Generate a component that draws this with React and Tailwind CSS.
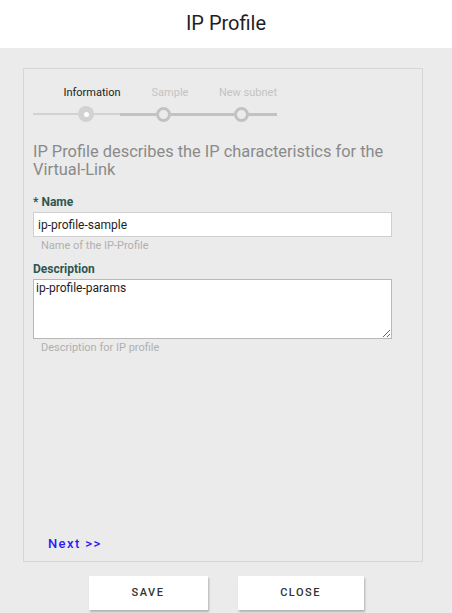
export default function App() {
  const font = { fontFamily: 'Roboto, "Liberation Sans", sans-serif' };
  return (
    <div className="w-[452px] h-[613px] flex flex-col bg-[#ebebeb]" style={font}>
      <div className="h-[48px] bg-white flex items-center justify-center shrink-0">
        <h1 className="text-[20px] leading-none text-[#1f1f1f] pb-[2px]">IP Profile</h1>
      </div>

      <div className="flex-1 flex flex-col">
        <div className="mt-[20px] ml-[23px] w-[400px] h-[494px] border border-[#d6d6d6] flex flex-col px-[9px]">
          {/* stepper */}
          <div className="mt-[17px] flex text-[11px] leading-[14px] h-[14px]">
            <span className="ml-[20px] w-[78px] text-center text-[#222]">Information</span>
            <span className="w-[78px] text-center text-[#c4c4c4]">Sample</span>
            <span className="w-[78px] text-center text-[#c4c4c4]">New subnet</span>
          </div>
          <div className="mt-[6px] h-[16px] flex items-center">
            <div className="w-[45px] h-[2px] bg-[#d2d2d2]" />
            <div className="w-[16px] h-[16px] rounded-full bg-[#d2d2d2] flex items-center justify-center">
              <div className="w-[5px] h-[5px] rounded-full bg-white" />
            </div>
            <div className="w-[26px] h-[2px] bg-[#d2d2d2]" />
            <div className="w-[36px] h-[3px] bg-[#c2c2c2]" />
            <div className="w-[15px] h-[15px] rounded-full border-[3px] border-[#c2c2c2]" />
            <div className="w-[63px] h-[3px] bg-[#c2c2c2]" />
            <div className="w-[15px] h-[15px] rounded-full border-[3px] border-[#c2c2c2]" />
            <div className="w-[28px] h-[3px] bg-[#c2c2c2]" />
          </div>

          <p className="mt-[21px] text-[16.4px] leading-[18px] text-[#8a8a8a] pr-[10px]">
            IP Profile describes the IP characteristics for the Virtual-Link
          </p>

          <label className="mt-[15px] text-[12px] leading-[16px] font-bold text-[#2e5750]">* Name</label>
          <div className="mt-[2px] w-[359px] h-[25px] bg-white border border-[#cfcfcf] flex items-center px-[4px] text-[12px] text-[#1e1e1e]">
            ip-profile-sample
          </div>
          <p className="mt-[2px] ml-[8px] text-[11px] leading-[14px] text-[#b0b0b0]">Name of the IP-Profile</p>

          <label className="mt-[8px] text-[12px] leading-[16px] font-bold text-[#2e5750]">Description</label>
          <textarea
            readOnly
            defaultValue="ip-profile-params"
            className="mt-[2px] w-[359px] h-[60px] bg-white border border-[#b8b8b8] px-[2px] py-0 text-[12px] leading-[16px] text-[#1e1e1e] outline-none"
            style={font}
          />
          <p className="mt-[2px] ml-[8px] text-[11px] leading-[14px] text-[#b0b0b0]">Description for IP profile</p>

          <div className="flex-1" />
          <a className="mb-[8px] ml-[15px] text-[13px] leading-[18px] font-medium tracking-[1.4px] text-[#2b1cf5]">Next &gt;&gt;</a>
        </div>

        <div className="mt-[14px] flex justify-center gap-[30px]">
          <button className="w-[119px] h-[34px] bg-white shadow-[1px_2px_2px_rgba(0,0,0,0.25)] text-[11px] font-medium tracking-[1.5px] text-[#333]">
            SAVE
          </button>
          <button className="w-[126px] h-[34px] bg-white shadow-[1px_2px_2px_rgba(0,0,0,0.25)] text-[11px] font-medium tracking-[1.5px] text-[#333]">
            CLOSE
          </button>
        </div>
      </div>
    </div>
  );
}
